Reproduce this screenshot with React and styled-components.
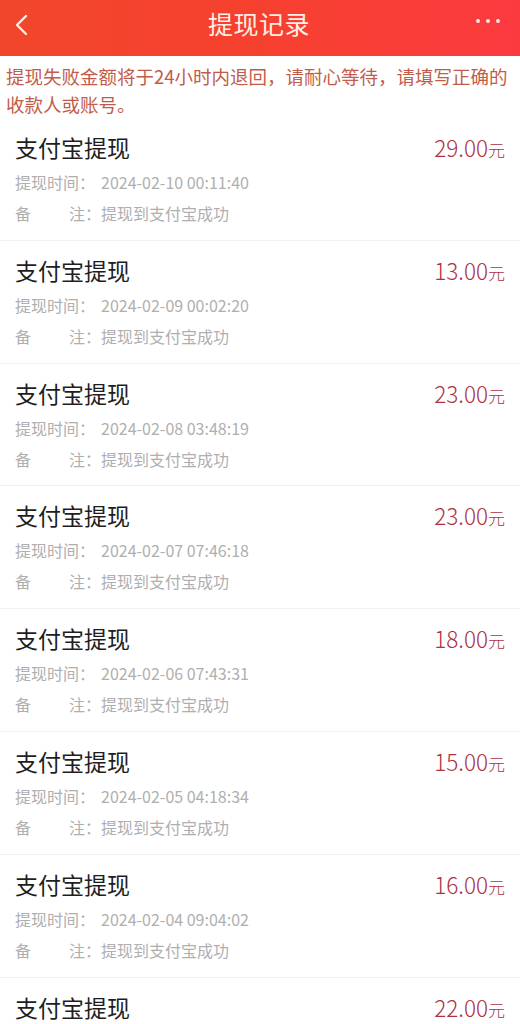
import styled, { createGlobalStyle } from "styled-components";

const GlobalStyle = createGlobalStyle`
  body {
    margin: 0;
    background: #fff;
    font-family: "Noto Sans CJK SC", "Noto Sans", sans-serif;
  }
`;

const records = [
  { amount: "29.00", time: "2024-02-10 00:11:40" },
  { amount: "13.00", time: "2024-02-09 00:02:20" },
  { amount: "23.00", time: "2024-02-08 03:48:19" },
  { amount: "23.00", time: "2024-02-07 07:46:18" },
  { amount: "18.00", time: "2024-02-06 07:43:31" },
  { amount: "15.00", time: "2024-02-05 04:18:34" },
  { amount: "16.00", time: "2024-02-04 09:04:02" },
  { amount: "22.00", time: "2024-02-03 08:12:45" },
];

export default function App() {
  return (
    <>
      <GlobalStyle />
      <Page>
        <Header>
          <BackButton>
            <svg width="14" height="22" viewBox="0 0 14 22">
              <path
                d="M12 2 L3 11 L12 20"
                fill="none"
                stroke="#fdeee6"
                strokeWidth="2.4"
                strokeLinecap="round"
                strokeLinejoin="round"
              />
            </svg>
          </BackButton>
          <Title>提现记录</Title>
          <MoreButton>
            <Dot />
            <Dot />
            <Dot />
          </MoreButton>
        </Header>

        <Notice>
          提现失败金额将于24小时内退回，请耐心等待，请填写正确的收款人或账号。
        </Notice>

        <List>
          {records.map((r, i) => (
            <Item key={i}>
              <TopRow>
                <ItemTitle>支付宝提现</ItemTitle>
                <Amount>
                  {r.amount}
                  <Unit>元</Unit>
                </Amount>
              </TopRow>
              <InfoRow>
                <Label>提现时间：</Label>
                <span>{r.time}</span>
              </InfoRow>
              <InfoRow>
                <Label $spread>
                  <span>备</span>
                  <span>注：</span>
                </Label>
                <span>提现到支付宝成功</span>
              </InfoRow>
            </Item>
          ))}
        </List>
      </Page>
    </>
  );
}

const Page = styled.div`
  width: 520px;
  height: 1024px;
  overflow: hidden;
  background: #fff;
`;

const Header = styled.header`
  height: 56px;
  display: flex;
  align-items: center;
  justify-content: space-between;
  padding: 0 20px 0 14px;
  box-sizing: border-box;
  background: linear-gradient(90deg, #f1462c 0%, #f6402f 50%, #fb3a3f 100%);
`;

const BackButton = styled.div`
  width: 40px;
  display: flex;
  align-items: center;
  margin-top: -6px;
`;

const Title = styled.h1`
  margin: 0;
  margin-top: -10px;
  margin-left: 4px;
  font-size: 25px;
  font-weight: 400;
  color: #fdeee6;
  letter-spacing: 0.5px;
`;

const MoreButton = styled.div`
  width: 40px;
  display: flex;
  justify-content: flex-end;
  gap: 6px;
  margin-top: -14px;
`;

const Dot = styled.span`
  width: 4px;
  height: 4px;
  border-radius: 50%;
  background: #fde9e4;
`;

const Notice = styled.p`
  margin: 0;
  padding: 6px 6px 0 6px;
  font-size: 18.5px;
  line-height: 28px;
  color: #c25c4a;
`;

const List = styled.div`
  display: flex;
  flex-direction: column;
`;

const Item = styled.div`
  padding: 13px 15px 10.8px 15px;
  border-bottom: 1px solid #f0f0f0;
`;

const TopRow = styled.div`
  display: flex;
  justify-content: space-between;
  align-items: center;
  height: 32px;
  margin-bottom: 4px;
`;

const ItemTitle = styled.div`
  font-size: 23px;
  color: #1e1e1e;
`;

const Amount = styled.div`
  font-size: 22.5px;
  color: #ad3143;
  font-weight: 300;
`;

const Unit = styled.span`
  font-size: 17px;
`;

const InfoRow = styled.div`
  display: flex;
  font-size: 16px;
  line-height: 31px;
  color: #afafaf;
`;

const Label = styled.span`
  width: 86px;
  flex-shrink: 0;
  display: flex;
  justify-content: ${(p) => (p.$spread ? "space-between" : "flex-start")};
`;
